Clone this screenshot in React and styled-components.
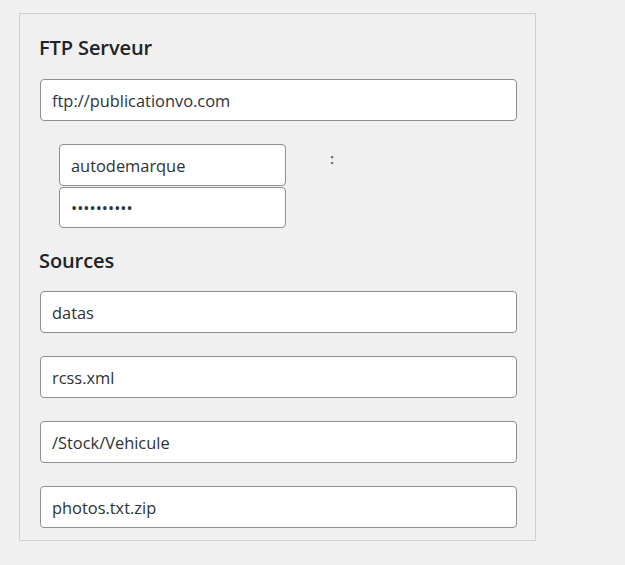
import React from "react";
import styled, { createGlobalStyle } from "styled-components";

const GlobalStyle = createGlobalStyle`
    html, body {
        margin: 0;
        padding: 0;
        background: #f0f0f1;
        font-family: "Open Sans", "Noto Sans", sans-serif;
        color: #1d2327;
    }
`;

const Page = styled.div`
    padding: 13px 0 0 19px;
`;

const Panel = styled.div`
    box-sizing: border-box;
    width: 517px;
    height: 528px;
    border: 1px solid #cfd0d2;
    padding: 0 17px 0 20px;
`;

const Heading = styled.h2`
    margin: ${props => props.top}px 0 0 -1px;
    font-size: 20px;
    line-height: 26px;
    font-weight: 600;
    letter-spacing: -0.1px;
    color: #1d2327;
`;

const Field = styled.input`
    box-sizing: border-box;
    display: block;
    width: ${props => props.width || 477}px;
    height: ${props => props.height || 42}px;
    margin: ${props => props.top || 0}px 0 0 0;
    padding: 0 11px;
    border: 1px solid #8c8f94;
    border-radius: 4px;
    background: #fff;
    font-family: "Open Sans", "Noto Sans", sans-serif;
    font-size: 16.4px;
    color: #2c3338;
    outline: none;
`;

const Credentials = styled.div`
    display: flex;
    align-items: flex-start;
    margin: 23px 0 0 19px;
`;

const CredentialStack = styled.div`
    display: flex;
    flex-direction: column;
    gap: 1px;
`;

const Separator = styled.span`
    margin: 4px 0 0 44px;
    font-size: 15px;
    line-height: 20px;
    font-weight: 600;
    color: #50575e;
`;

const sources = ["datas", "rcss.xml", "/Stock/Vehicule", "photos.txt.zip"];

export default function App() {
    return (
        <>
            <GlobalStyle />
            <Page>
                <Panel>
                    <Heading top={21}>FTP Serveur</Heading>
                    <Field top={18} defaultValue="ftp://publicationvo.com" />
                    <Credentials>
                        <CredentialStack>
                            <Field width={227} height={42} defaultValue="autodemarque" />
                            <Field width={227} height={41} type="password" defaultValue="motdepasse" />
                        </CredentialStack>
                        <Separator>:</Separator>
                    </Credentials>
                    <Heading top={20}>Sources</Heading>
                    {sources.map((src, i) => (
                        <Field key={src} top={i === 0 ? 17 : 23} defaultValue={src} />
                    ))}
                </Panel>
            </Page>
        </>
    );
}
